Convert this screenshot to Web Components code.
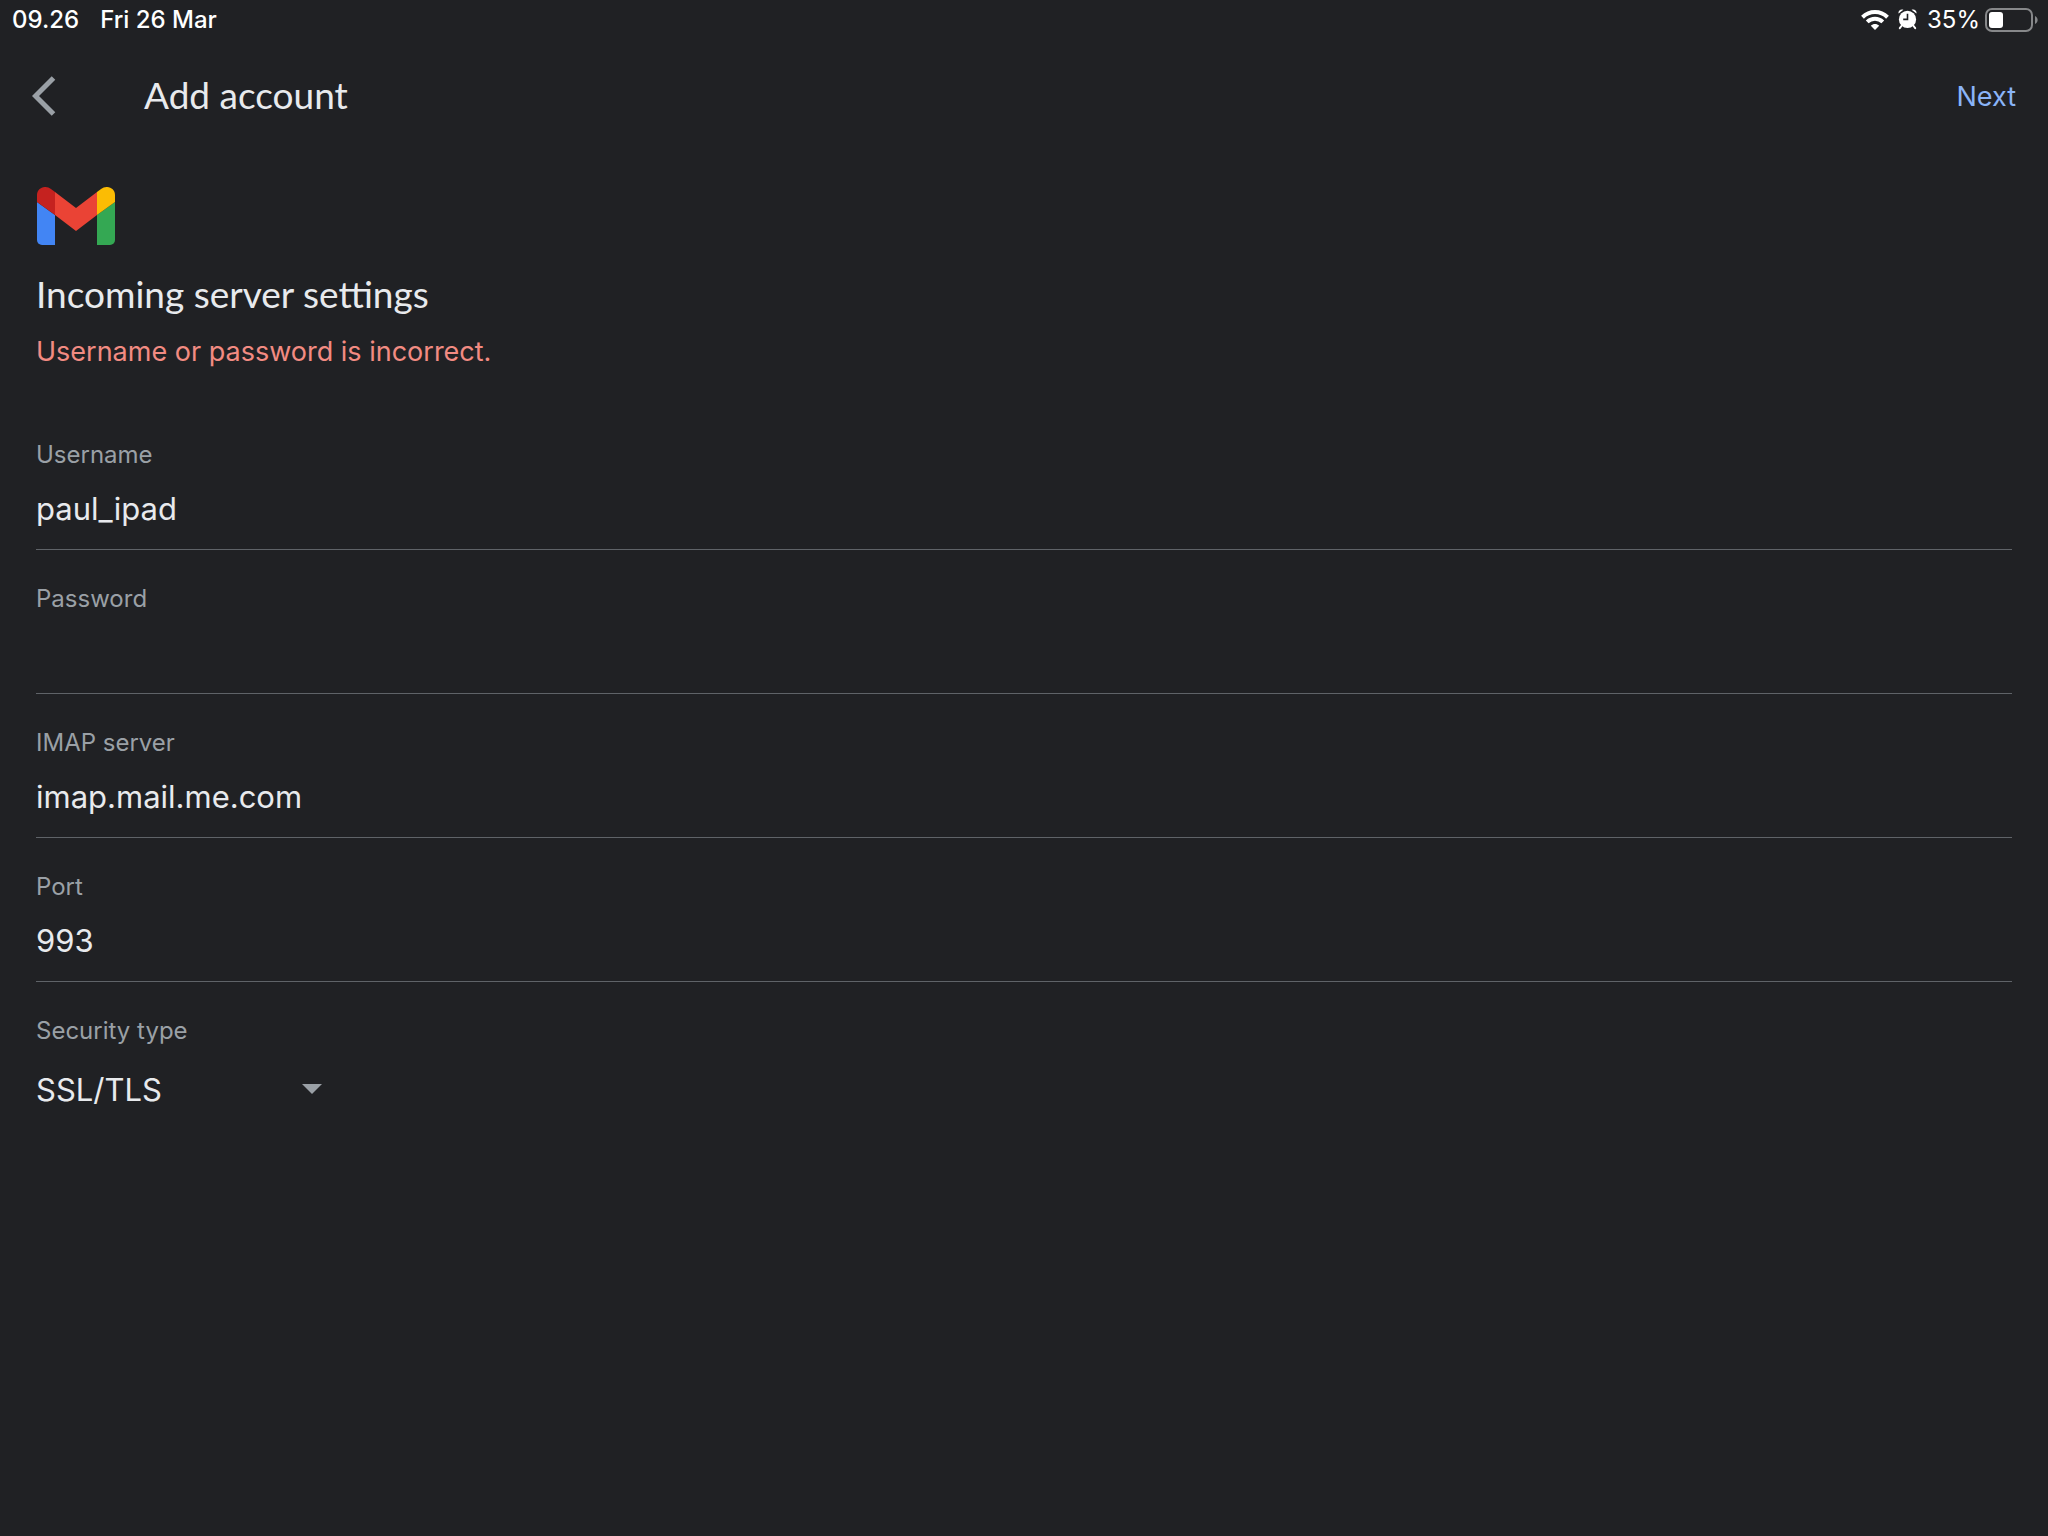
<!DOCTYPE html>
<html lang="en">
<head>
<meta charset="utf-8">
<meta name="viewport" content="width=device-width, initial-scale=1">
<title>Add account</title>
<style>
body {
    margin: 0;
    min-height: 100vh;
    background: #202124;
    color: #e8eaed;
    font-family: Inter, "Liberation Sans", sans-serif;
    --title-font: Lato, "Open Sans", sans-serif;
    --muted: #9aa0a6;
    --line: #5f6368;
    --link: #8ab4f8;
    --error: #f28b82;
}
</style>
</head>
<body>
<status-bar time="09.26" date="Fri 26 Mar" battery="35"></status-bar>
<nav-bar action="Next">Add account</nav-bar>
<server-form>
    <gmail-logo slot="logo"></gmail-logo>
    <span slot="title">Incoming server settings</span>
    <span slot="error">Username or password is incorrect.</span>
    <text-field label="Username" value="paul_ipad"></text-field>
    <text-field label="Password" type="password"></text-field>
    <text-field label="IMAP server" value="imap.mail.me.com"></text-field>
    <text-field label="Port" value="993"></text-field>
    <select-field label="Security type" options="SSL/TLS,STARTTLS,None"></select-field>
</server-form>

<script>
class StatusBar extends HTMLElement {
    constructor() {
        super();
        this._root = this.attachShadow({ mode: 'open' });
    }
    connectedCallback() {
        const battery = Number(this.getAttribute('battery'));
        this._root.innerHTML = `
        <style>
        :host {
            display: flex;
            justify-content: space-between;
            align-items: center;
            height: 40px;
            padding: 0 10px 0 12px;
            color: #fff;
            font-size: 24px;
            line-height: 28px;
            font-weight: 500;
        }
        .side { display: flex; align-items: center; }
        .left { gap: 21px; }
        .wifi { margin-right: 9px; }
        .alarm { margin-right: 10px; }
        .percent { margin-right: 5px; font-weight: 400; }
        svg { display: block; }
        </style>
        <div class="side left"><span>${this.getAttribute('time')}</span><span>${this.getAttribute('date')}</span></div>
        <div class="side">
            <svg class="wifi" width="28" height="20" viewBox="0 0 28 20" fill="none" stroke="#fff" stroke-width="4">
                <path d="M1.5 7.2C8.5.4 19.5.4 26.5 7.2"/>
                <path d="M6.2 11.9c4.5-4.2 11.1-4.2 15.6 0"/>
                <path d="M14 20l-4.2-4.3c2.4-2.2 6-2.2 8.4 0z" fill="#fff" stroke="none"/>
            </svg>
            <svg class="alarm" width="19" height="22" viewBox="0 0 19 22">
                <path d="M.6 4.6C-.2 2 2.5-.4 5.4.8zM18.4 4.6C19.2 2 16.5-.4 13.6.8z" fill="#fff"/>
                <path d="M3.8 16.5l-2 2.6M15.2 16.5l2 2.6" stroke="#fff" stroke-width="2" stroke-linecap="round"/>
                <circle cx="9.5" cy="10.4" r="8.6" fill="#fff"/>
                <path d="M9.5 4.8v5.6H5.2" fill="none" stroke="#202124" stroke-width="1.6"/>
            </svg>
            <span class="percent">${battery}%</span>
            <svg width="53" height="24" viewBox="0 0 53 24">
                <rect x="1" y="1" width="46" height="22" rx="6" fill="none" stroke="#87888a" stroke-width="2"/>
                <path d="M50 8c3.5 1.5 3.5 6.5 0 8z" fill="#87888a"/>
                <rect x="4" y="4" width="${Math.round(40 * battery / 100)}" height="16" rx="3" fill="#fff"/>
            </svg>
        </div>
        `;
    }
}

class NavBar extends HTMLElement {
    constructor() {
        super();
        this._root = this.attachShadow({ mode: 'open' });
    }
    connectedCallback() {
        this._root.innerHTML = `
        <style>
        :host {
            display: flex;
            align-items: center;
            height: 112px;
            padding: 0 32px;
        }
        button {
            padding: 0;
            border: 0;
            background: none;
            font: inherit;
            cursor: pointer;
        }
        svg { display: block; }
        h1 {
            flex: 1;
            margin: 0 0 0 88px;
            padding-bottom: 2px;
            font: 400 37px/48px var(--title-font);
        }
        .action { color: var(--link); font-size: 27px; }
        </style>
        <button class="back" type="button" aria-label="Back">
            <svg width="24" height="40" viewBox="0 0 24 40" fill="none" stroke="#9aa0a6" stroke-width="5"><path d="M21.5 2L3.5 20l18 18"/></svg>
        </button>
        <h1><slot></slot></h1>
        <button class="action" type="button">${this.getAttribute('action')}</button>
        `;
    }
}

class GmailLogo extends HTMLElement {
    constructor() {
        super();
        this._root = this.attachShadow({ mode: 'open' });
        this._root.innerHTML = `
        <style>
        :host { display: block; }
        svg { display: block; }
        </style>
        <svg width="80" height="58" viewBox="-1 0 80 58" role="img" aria-label="Gmail">
            <path d="M0 15l18 13v30H5a5 5 0 0 1-5-5z" fill="#4285f4"/>
            <path d="M60 28l18-13v38a5 5 0 0 1-5 5H60z" fill="#34a853"/>
            <path d="M18 5l21 16L60 5v23L39 44 18 28z" fill="#ea4335"/>
            <path d="M0 15V8C0 1 8-2.5 14 2l4 3v23z" fill="#c5221f"/>
            <path d="M60 5l4-3c6-4.5 14-1 14 6v7L60 28z" fill="#fbbc04"/>
        </svg>
        `;
    }
}

class ServerForm extends HTMLElement {
    constructor() {
        super();
        this._root = this.attachShadow({ mode: 'open' });
        this._root.innerHTML = `
        <style>
        :host { display: block; padding: 35px 36px; }
        h2 {
            margin: 25px 0 0;
            font: 400 37px/48px var(--title-font);
        }
        p {
            margin: 14px 0 67px;
            color: var(--error);
            font-size: 27px;
            line-height: 40px;
        }
        </style>
        <slot name="logo"></slot>
        <h2><slot name="title"></slot></h2>
        <p role="alert"><slot name="error"></slot></p>
        <form><slot></slot></form>
        `;
    }
}

class TextField extends HTMLElement {
    constructor() {
        super();
        this._root = this.attachShadow({ mode: 'open' });
    }
    connectedCallback() {
        this._root.innerHTML = `
        <style>
        :host { display: block; margin-bottom: 33px; }
        label {
            display: block;
            color: var(--muted);
            font-size: 24px;
            line-height: 32px;
        }
        input {
            display: block;
            box-sizing: border-box;
            width: 100%;
            height: 79px;
            padding: 0 0 4px;
            border: 0;
            border-bottom: 1px solid var(--line);
            border-radius: 0;
            outline: 0;
            background: none;
            color: inherit;
            font: inherit;
            font-size: 31px;
        }
        </style>
        <label for="field">${this.getAttribute('label')}</label>
        <input id="field" type="${this.getAttribute('type') || 'text'}" value="${this.getAttribute('value') || ''}">
        `;
    }
}

class SelectField extends HTMLElement {
    constructor() {
        super();
        this._root = this.attachShadow({ mode: 'open' });
    }
    connectedCallback() {
        const options = this.getAttribute('options').split(',');
        this._root.innerHTML = `
        <style>
        :host { display: block; }
        label {
            display: block;
            color: var(--muted);
            font-size: 24px;
            line-height: 32px;
        }
        .box {
            display: grid;
            align-items: center;
            width: 286px;
            margin-top: 10px;
        }
        select, svg { grid-area: 1 / 1; }
        select {
            appearance: none;
            height: 64px;
            padding: 0;
            border: 0;
            outline: 0;
            background: none;
            color: inherit;
            font: inherit;
            font-size: 31px;
        }
        option { color: #202124; }
        svg { justify-self: end; pointer-events: none; }
        </style>
        <label for="field">${this.getAttribute('label')}</label>
        <div class="box">
            <select id="field">${options.map(o => `<option>${o}</option>`).join('')}</select>
            <svg width="20" height="10" viewBox="0 0 20 10"><path d="M0 0h20L10 10z" fill="#9aa0a6"/></svg>
        </div>
        `;
    }
}

window.customElements.define('status-bar', StatusBar);
window.customElements.define('nav-bar', NavBar);
window.customElements.define('gmail-logo', GmailLogo);
window.customElements.define('server-form', ServerForm);
window.customElements.define('text-field', TextField);
window.customElements.define('select-field', SelectField);
</script>
</body>
</html>
